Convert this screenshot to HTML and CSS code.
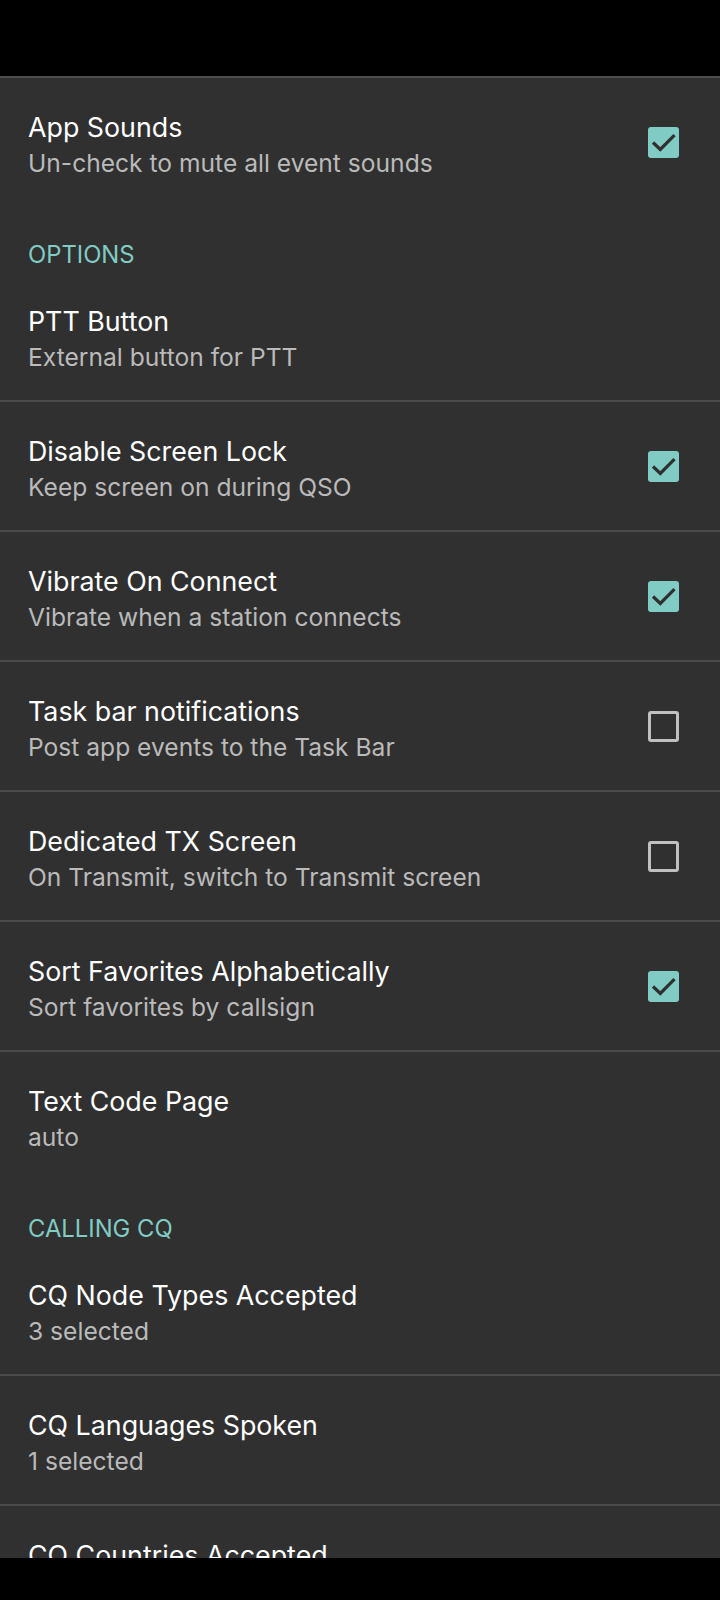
FILE: index.html
```html
<!DOCTYPE html>
<html>
<head>
<meta charset="utf-8">
<link rel="stylesheet" href="styles.css">
</head>
<body>
<div class="screen">
  <div class="status-bar"></div>
  <div class="content">
    <div class="pref">
      <div class="pref-text">
        <div class="pref-title">App Sounds</div>
        <div class="pref-summary">Un-check to mute all event sounds</div>
      </div>
      <span class="check on"><svg viewBox="0 0 31 31" width="31" height="31"><path d="M5 15.5 L12.3 22.5 L26.5 8.2"/></svg></span>
    </div>

    <div class="category">OPTIONS</div>

    <div class="pref">
      <div class="pref-text">
        <div class="pref-title">PTT Button</div>
        <div class="pref-summary">External button for PTT</div>
      </div>
    </div>
    <div class="divider"></div>
    <div class="pref">
      <div class="pref-text">
        <div class="pref-title">Disable Screen Lock</div>
        <div class="pref-summary">Keep screen on during QSO</div>
      </div>
      <span class="check on"><svg viewBox="0 0 31 31" width="31" height="31"><path d="M5 15.5 L12.3 22.5 L26.5 8.2"/></svg></span>
    </div>
    <div class="divider"></div>
    <div class="pref">
      <div class="pref-text">
        <div class="pref-title">Vibrate On Connect</div>
        <div class="pref-summary">Vibrate when a station connects</div>
      </div>
      <span class="check on"><svg viewBox="0 0 31 31" width="31" height="31"><path d="M5 15.5 L12.3 22.5 L26.5 8.2"/></svg></span>
    </div>
    <div class="divider"></div>
    <div class="pref">
      <div class="pref-text">
        <div class="pref-title">Task bar notifications</div>
        <div class="pref-summary">Post app events to the Task Bar</div>
      </div>
      <span class="check off"></span>
    </div>
    <div class="divider"></div>
    <div class="pref">
      <div class="pref-text">
        <div class="pref-title">Dedicated TX Screen</div>
        <div class="pref-summary">On Transmit, switch to Transmit screen</div>
      </div>
      <span class="check off"></span>
    </div>
    <div class="divider"></div>
    <div class="pref">
      <div class="pref-text">
        <div class="pref-title">Sort Favorites Alphabetically</div>
        <div class="pref-summary">Sort favorites by callsign</div>
      </div>
      <span class="check on"><svg viewBox="0 0 31 31" width="31" height="31"><path d="M5 15.5 L12.3 22.5 L26.5 8.2"/></svg></span>
    </div>
    <div class="divider"></div>
    <div class="pref">
      <div class="pref-text">
        <div class="pref-title">Text Code Page</div>
        <div class="pref-summary">auto</div>
      </div>
    </div>

    <div class="category">CALLING CQ</div>

    <div class="pref">
      <div class="pref-text">
        <div class="pref-title">CQ Node Types Accepted</div>
        <div class="pref-summary">3 selected</div>
      </div>
    </div>
    <div class="divider"></div>
    <div class="pref">
      <div class="pref-text">
        <div class="pref-title">CQ Languages Spoken</div>
        <div class="pref-summary">1 selected</div>
      </div>
    </div>
    <div class="divider"></div>
    <div class="pref">
      <div class="pref-text">
        <div class="pref-title">CQ Countries Accepted</div>
      </div>
    </div>
  </div>
  <div class="nav-bar"></div>
</div>
</body>
</html>
```
FILE: styles.css
```css
* { box-sizing: border-box; }
html, body { margin: 0; padding: 0; background: #000; }
body { font-family: "Inter", "Noto Sans", sans-serif; }

.screen {
  width: 720px;
  height: 1600px;
  display: flex;
  flex-direction: column;
  background: #303030;
  overflow: hidden;
}

.status-bar {
  height: 76px;
  flex: none;
  background: #000;
  border-bottom: 2px solid #4d4d4d;
  box-sizing: content-box;
}

.content {
  flex: 1;
  overflow: hidden;
  background: #303030;
}

.nav-bar {
  height: 42px;
  flex: none;
  background: #000;
}

.pref {
  height: 128px;
  display: flex;
  align-items: center;
  padding: 0 41px 0 28px;
}

.pref-text {
  flex: 1;
  align-self: flex-start;
  padding-top: 31px;
}

.pref-title {
  font-size: 26.8px;
  line-height: 36px;
  color: #ffffff;
  white-space: nowrap;
}

.pref-summary {
  font-size: 24.6px;
  line-height: 36px;
  color: #bababa;
  white-space: nowrap;
}

.divider {
  height: 2px;
  background: #494949;
}

.category {
  height: 66px;
  padding: 34px 0 0 28px;
  font-size: 23.8px;
  line-height: 30px;
  color: #80cbc4;
}

.check {
  width: 31px;
  height: 31px;
  flex: none;
  border-radius: 3px;
  display: block;
}

.check.on {
  background: #80cbc4;
}

.check.on svg {
  display: block;
  fill: none;
  stroke: #303030;
  stroke-width: 3.2;
  stroke-linecap: butt;
  stroke-linejoin: miter;
}

.check.off {
  border: 3.3px solid #c0c0c0;
}
```
